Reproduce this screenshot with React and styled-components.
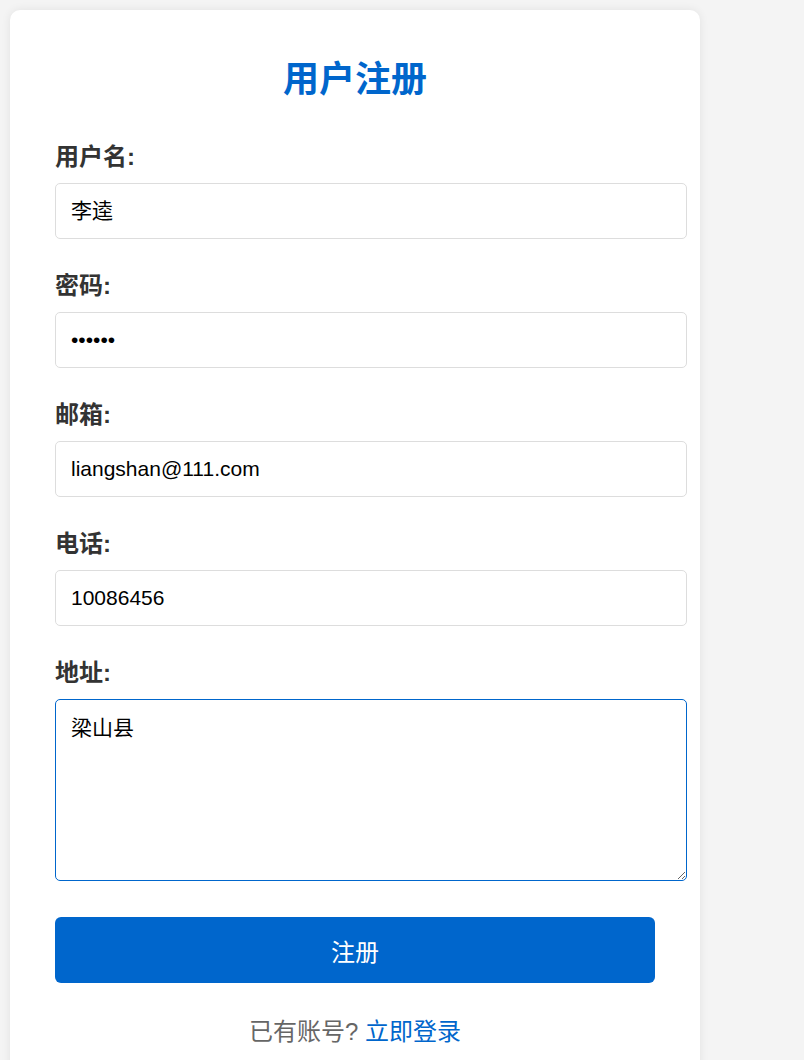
import { useEffect, useRef } from "react";
import styled, { createGlobalStyle } from "styled-components";

const fields = [
    { id: "username", label: "用户名:", type: "text", value: "李逵" },
    { id: "password", label: "密码:", type: "password", value: "123456" },
    { id: "email", label: "邮箱:", type: "email", value: "liangshan@111.com" },
    { id: "phone", label: "电话:", type: "tel", value: "10086456" },
];

export default function App() {
    const addressRef = useRef(null);

    // Adresse hat den Fokus, Cursor am Ende
    useEffect(() => {
        const el = addressRef.current;
        if (el) {
            el.focus();
            el.setSelectionRange(el.value.length, el.value.length);
        }
    }, []);

    return (
        <>
            <GlobalStyle />
            <StyledCard>
                <StyledTitle>用户注册</StyledTitle>
                <form onSubmit={(e) => e.preventDefault()}>
                    {fields.map((field) => (
                        <StyledGroup key={field.id}>
                            <StyledLabel htmlFor={field.id}>{field.label}</StyledLabel>
                            <StyledInput id={field.id} type={field.type} defaultValue={field.value} />
                        </StyledGroup>
                    ))}
                    <StyledGroup>
                        <StyledLabel htmlFor="address">地址:</StyledLabel>
                        <StyledTextarea id="address" ref={addressRef} defaultValue="梁山县" />
                    </StyledGroup>
                    <StyledButton type="submit">注册</StyledButton>
                </form>
                <StyledFooter>
                    已有账号? <StyledLink href="#">立即登录</StyledLink>
                </StyledFooter>
            </StyledCard>
        </>
    );
}

const GlobalStyle = createGlobalStyle`
    body {
        margin: 0;
        background: #f4f4f4;
        font-family: "Liberation Sans", "Noto Sans CJK SC", sans-serif;
    }
`;

const StyledCard = styled.div`
    width: 600px;
    margin: 10px;
    padding: 50px 45px 45px;
    background: #fff;
    border-radius: 10px;
    box-shadow: 0 0 10px rgba(0, 0, 0, 0.08);
`;

const StyledTitle = styled.h2`
    margin: 0 0 45px;
    text-align: center;
    font-size: 36px;
    line-height: 40px;
    font-weight: 700;
    color: #0066cc;
`;

const StyledGroup = styled.div`
    margin-bottom: 35px;
`;

const StyledLabel = styled.label`
    display: block;
    margin-bottom: 14px;
    font-size: 24px;
    line-height: 24px;
    font-weight: 700;
    color: #333;
`;

const StyledInput = styled.input`
    display: block;
    width: 100%;
    padding: 15px;
    border: 1px solid #ddd;
    border-radius: 5px;
    font-family: inherit;
    font-size: 21px;
    line-height: 24px;
    color: #000;
    outline: none;

    &:focus {
        border-color: #0066cc;
    }
`;

const StyledTextarea = styled.textarea`
    display: block;
    width: 100%;
    height: 150px;
    padding: 16px 15px 14px;
    border: 1px solid #ddd;
    border-radius: 5px;
    font-family: inherit;
    font-size: 21px;
    line-height: 24px;
    color: #000;
    outline: none;

    &:focus {
        border-color: #0066cc;
    }
`;

const StyledButton = styled.button`
    display: block;
    width: 100%;
    height: 66px;
    margin-top: 36px;
    border: none;
    border-radius: 6px;
    background: #0066cc;
    color: #fff;
    font-family: inherit;
    font-size: 24px;
    cursor: pointer;
`;

const StyledFooter = styled.p`
    margin: 37px 0 0;
    text-align: center;
    font-size: 24px;
    line-height: 24px;
    color: #666;
`;

const StyledLink = styled.a`
    color: #0066cc;
    text-decoration: none;
`;
